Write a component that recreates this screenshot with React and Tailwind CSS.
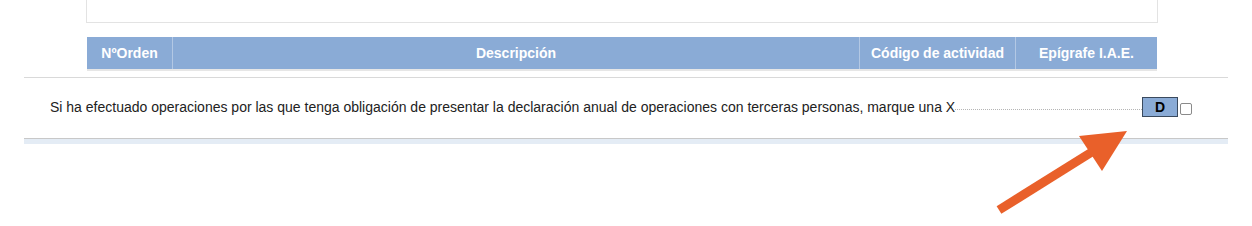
export default function App() {
  const cols = [
    { label: 'NºOrden', w: 'w-[85px]' },
    { label: 'Descripción', w: 'flex-1' },
    { label: 'Código de actividad', w: 'w-[156px]' },
    { label: 'Epígrafe I.A.E.', w: 'w-[142px]' },
  ];

  return (
    <div className="relative w-[1252px] h-[226px] bg-white font-['Liberation_Sans',Arial,sans-serif] overflow-hidden">
      {/* previous box, cut off at the top */}
      <div className="ml-[86px] w-[1072px] h-[23px] border-x border-b border-[#e3e3e3]" />

      {/* activity table header */}
      <div className="ml-[87px] mt-[14px] w-[1070px] flex h-[32px] bg-[#8aabd6] border-b-2 border-[#e6e6e6] box-content">
        {cols.map((c, i) => (
          <div
            key={c.label}
            className={`${c.w} flex items-center justify-center pt-[1px] text-white font-bold text-[14px] ${i > 0 ? 'border-l border-[#b3c8e4]' : ''}`}
          >
            {c.label}
          </div>
        ))}
      </div>

      {/* question row */}
      <div className="ml-[24px] mt-[6px] w-[1204px] border-t border-[#d9d9d9]">
        <div className="flex items-center h-[60px] pl-[26px] pr-[36px] pb-[2px]">
          <span className="text-[14px] text-[#222] whitespace-nowrap">
            Si ha efectuado operaciones por las que tenga obligación de presentar la declaración anual de operaciones con terceras personas, marque una X
          </span>
          <span className="flex-1 self-end mb-[26px] border-b border-dotted border-[#b5b5b5]" />
          <span className="w-[36px] h-[20px] bg-[#8aabd6] border border-[#3a4a5e] flex items-center justify-center text-[14px] font-bold text-black">
            D
          </span>
          <span className="ml-[2px] mt-[4px] w-[12px] h-[12px] rounded-[2px] border border-[#8a8a8a] bg-white" />
        </div>
        <div className="border-t border-[#c8c8c8] h-[6px] bg-[#e4ecf5]" />
      </div>

      {/* orange arrow */}
      <svg className="absolute left-0 top-0 pointer-events-none" width="1252" height="226" viewBox="0 0 1252 226">
        <line x1="999" y1="210" x2="1095" y2="150" stroke="#e9602a" strokeWidth="9" />
        <polygon points="1127,131 1079,136 1102,171" fill="#e9602a" />
      </svg>
    </div>
  );
}
